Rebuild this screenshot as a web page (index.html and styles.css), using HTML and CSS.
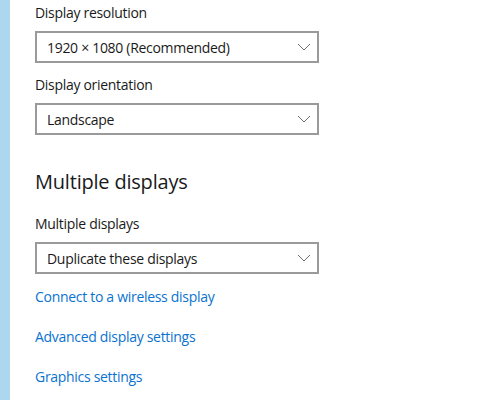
FILE: index.html
```html
<!DOCTYPE html>
<html>
<head>
<meta charset="utf-8">
<link rel="stylesheet" href="styles.css">
</head>
<body>
<div class="page">
  <div class="rail"></div>
  <main class="content">
    <div class="field">
      <div class="label">Display resolution</div>
      <div class="select"><span>1920 × 1080 (Recommended)</span><svg class="chev" width="14" height="8" viewBox="0 0 14 8"><path d="M1 1 L7 7 L13 1" fill="none" stroke="#6e6e6e" stroke-width="1"/></svg></div>
    </div>
    <div class="field">
      <div class="label">Display orientation</div>
      <div class="select"><span>Landscape</span><svg class="chev" width="14" height="8" viewBox="0 0 14 8"><path d="M1 1 L7 7 L13 1" fill="none" stroke="#6e6e6e" stroke-width="1"/></svg></div>
    </div>
    <h2 class="heading">Multiple displays</h2>
    <div class="field">
      <div class="label">Multiple displays</div>
      <div class="select"><span>Duplicate these displays</span><svg class="chev" width="14" height="8" viewBox="0 0 14 8"><path d="M1 1 L7 7 L13 1" fill="none" stroke="#6e6e6e" stroke-width="1"/></svg></div>
    </div>
    <nav class="links">
      <a class="link" href="#">Connect to a wireless display</a>
      <a class="link" href="#">Advanced display settings</a>
      <a class="link" href="#">Graphics settings</a>
    </nav>
  </main>
</div>
</body>
</html>
```
FILE: styles.css
```css
html, body {
  margin: 0;
  padding: 0;
  background: #ffffff;
}
body {
  font-family: "Open Sans", "Noto Sans", sans-serif;
  color: #1a1a1a;
}
.page {
  display: flex;
  min-height: 400px;
}
.rail {
  width: 10px;
  flex: none;
  background: #acd7ee;
}
.content {
  padding: 3px 0 0 25px;
  display: flex;
  flex-direction: column;
}
.field {
  display: flex;
  flex-direction: column;
  gap: 8px;
  margin-bottom: 12px;
}
.label {
  font-size: 14px;
  line-height: 20px;
  letter-spacing: -0.3px;
}
.select {
  box-sizing: border-box;
  width: 284px;
  height: 32px;
  border: 2px solid #9a9a9a;
  display: flex;
  align-items: center;
  justify-content: space-between;
  padding: 0 6px 0 10px;
  font-size: 14px;
  letter-spacing: -0.3px;
}
.chev {
  display: block;
}
.heading {
  margin: 22px 0 19px;
  font-weight: 400;
  font-size: 20px;
  line-height: 26px;
  letter-spacing: -0.2px;
}
.links {
  display: flex;
  flex-direction: column;
  gap: 20px;
  margin-top: 1px;
}
.link {
  color: #0a73d0;
  text-decoration: none;
  font-size: 14px;
  line-height: 20px;
  letter-spacing: -0.3px;
}
```
